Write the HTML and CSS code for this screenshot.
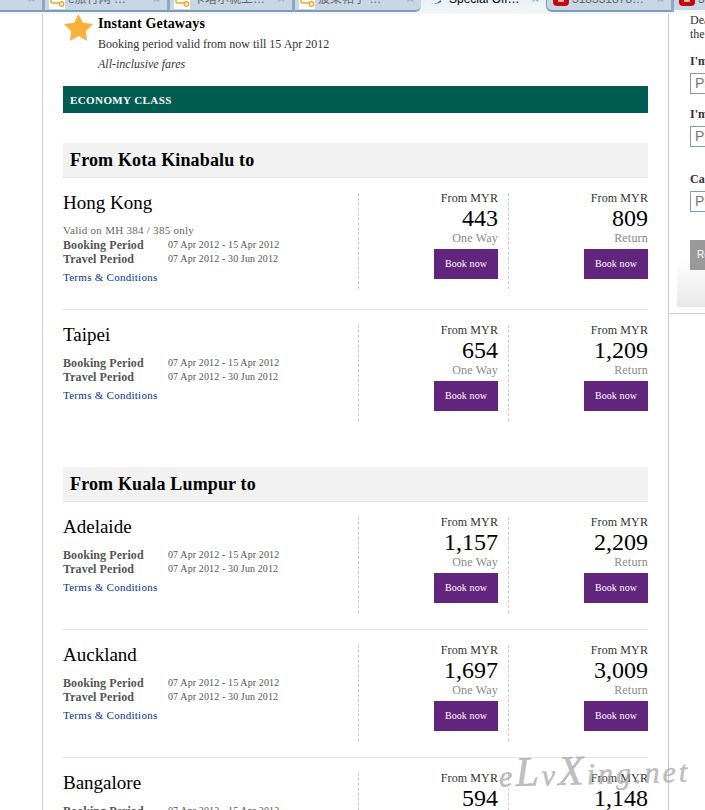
FILE: index.html

```html
<!DOCTYPE html>
<html lang="en">
<head>
  <meta charset="UTF-8">
  <title>Special Offers</title>
  <meta name="viewport" content="width=device-width, initial-scale=1.0">
  <link rel="stylesheet" href="styles.css">
</head>
<body>

<div class="tabs">
  <div class="tab tab-first"><span class="tab-x">×</span></div>
  <div class="tab tab-doc">
    <svg class="doc-icon" width="16" height="9" viewBox="0 0 16 9"><rect width="16" height="9" fill="#fff"/><path d="M2 0v1.5q0 1.5 2 1.5h6" fill="none" stroke="#f5a623" stroke-width="1.5"/><circle cx="12.5" cy="4" r="2.2" fill="#fff" stroke="#f5a623" stroke-width="1.4"/></svg>
    <span class="tab-name">e旅行网 …</span><span class="tab-x">×</span>
  </div>
  <div class="tab tab-doc">
    <svg class="doc-icon" width="16" height="9" viewBox="0 0 16 9"><rect width="16" height="9" fill="#fff"/><path d="M2 0v1.5q0 1.5 2 1.5h6" fill="none" stroke="#f5a623" stroke-width="1.5"/><circle cx="12.5" cy="4" r="2.2" fill="#fff" stroke="#f5a623" stroke-width="1.4"/></svg>
    <span class="tab-name">卡塔尔就上…</span><span class="tab-x">×</span>
  </div>
  <div class="tab tab-doc tab-before">
    <svg class="doc-icon" width="16" height="9" viewBox="0 0 16 9"><rect width="16" height="9" fill="#fff"/><path d="M2 0v1.5q0 1.5 2 1.5h6" fill="none" stroke="#f5a623" stroke-width="1.5"/><circle cx="12.5" cy="4" r="2.2" fill="#fff" stroke="#f5a623" stroke-width="1.4"/></svg>
    <span class="tab-name">菠菜帖子 …</span><span class="tab-x">×</span>
  </div>
  <div class="tab tab-active">
    <svg class="mh-icon" width="10" height="4" viewBox="0 0 10 4"><path d="M0 3q5 2 10-3v2q-4 3-10 1z" fill="#2f5f8f"/></svg>
    <span class="tab-name">Special Off…</span><span class="tab-x">×</span>
  </div>
  <div class="tab tab-red tab-after">
    <svg class="red-icon" width="16" height="6" viewBox="0 0 16 6"><path d="M0 0h16v2q0 4-4 4H4Q0 6 0 2z" fill="#c4080d"/><rect x="5" width="6" height="2" fill="#f3b5b5"/></svg>
    <span class="tab-name">318331878…</span><span class="tab-x">×</span>
  </div>
  <div class="tab tab-red tab-last">
    <svg class="red-icon" width="16" height="6" viewBox="0 0 16 6"><path d="M0 0h16v2q0 4-4 4H4Q0 6 0 2z" fill="#c4080d"/><rect x="5" width="6" height="2" fill="#f3b5b5"/></svg>
    <span class="tab-name">3</span>
  </div>
</div>

<div class="page">
  <main class="main">
    <div class="intro">
      <svg class="star" width="29" height="27" viewBox="0 0 29 27"><polygon fill="#fbb03b" points="14.5,0 18.8,8.8 29,10 21.8,17.2 23.2,27 14.5,22 6,27 7.2,17.2 0,10 10.2,8.8"/></svg>
      <div>
        <h3>Instant Getaways</h3>
        <p>Booking period valid from now till 15 Apr 2012</p>
        <p class="fares"><em>All-inclusive fares</em></p>
      </div>
    </div>

    <div class="class-bar">ECONOMY CLASS</div>

    <h2 class="from">From Kota Kinabalu to</h2>

    <div class="fare fare-note">
      <div class="info">
        <div class="city">Hong Kong</div>
        <div class="note">Valid on MH 384 / 385 only</div>
        <div class="period"><b>Booking Period</b><span>07 Apr 2012 - 15 Apr 2012</span></div>
        <div class="period"><b>Travel Period</b><span>07 Apr 2012 - 30 Jun 2012</span></div>
        <a class="terms" href="#">Terms &amp; Conditions</a>
      </div>
      <div class="price">
        <div class="label">From MYR</div>
        <div class="amount">443</div>
        <div class="way">One Way</div>
        <a class="book" href="#">Book now</a>
      </div>
      <div class="price">
        <div class="label">From MYR</div>
        <div class="amount">809</div>
        <div class="way">Return</div>
        <a class="book" href="#">Book now</a>
      </div>
    </div>

    <div class="fare fare-last">
      <div class="info">
        <div class="city">Taipei</div>
        <div class="period"><b>Booking Period</b><span>07 Apr 2012 - 15 Apr 2012</span></div>
        <div class="period"><b>Travel Period</b><span>07 Apr 2012 - 30 Jun 2012</span></div>
        <a class="terms" href="#">Terms &amp; Conditions</a>
      </div>
      <div class="price">
        <div class="label">From MYR</div>
        <div class="amount">654</div>
        <div class="way">One Way</div>
        <a class="book" href="#">Book now</a>
      </div>
      <div class="price">
        <div class="label">From MYR</div>
        <div class="amount">1,209</div>
        <div class="way">Return</div>
        <a class="book" href="#">Book now</a>
      </div>
    </div>

    <h2 class="from">From Kuala Lumpur to</h2>

    <div class="fare">
      <div class="info">
        <div class="city">Adelaide</div>
        <div class="period"><b>Booking Period</b><span>07 Apr 2012 - 15 Apr 2012</span></div>
        <div class="period"><b>Travel Period</b><span>07 Apr 2012 - 30 Jun 2012</span></div>
        <a class="terms" href="#">Terms &amp; Conditions</a>
      </div>
      <div class="price">
        <div class="label">From MYR</div>
        <div class="amount">1,157</div>
        <div class="way">One Way</div>
        <a class="book" href="#">Book now</a>
      </div>
      <div class="price">
        <div class="label">From MYR</div>
        <div class="amount">2,209</div>
        <div class="way">Return</div>
        <a class="book" href="#">Book now</a>
      </div>
    </div>

    <div class="fare">
      <div class="info">
        <div class="city">Auckland</div>
        <div class="period"><b>Booking Period</b><span>07 Apr 2012 - 15 Apr 2012</span></div>
        <div class="period"><b>Travel Period</b><span>07 Apr 2012 - 30 Jun 2012</span></div>
        <a class="terms" href="#">Terms &amp; Conditions</a>
      </div>
      <div class="price">
        <div class="label">From MYR</div>
        <div class="amount">1,697</div>
        <div class="way">One Way</div>
        <a class="book" href="#">Book now</a>
      </div>
      <div class="price">
        <div class="label">From MYR</div>
        <div class="amount">3,009</div>
        <div class="way">Return</div>
        <a class="book" href="#">Book now</a>
      </div>
    </div>

    <div class="fare">
      <div class="info">
        <div class="city">Bangalore</div>
        <div class="period"><b>Booking Period</b><span>07 Apr 2012 - 15 Apr 2012</span></div>
      </div>
      <div class="price">
        <div class="label">From MYR</div>
        <div class="amount">594</div>
      </div>
      <div class="price">
        <div class="label">From MYR</div>
        <div class="amount">1,148</div>
      </div>
    </div>
  </main>

  <aside class="side">
    <div class="side-inner">
      <p class="side-text">Dear<br>the</p>
      <label class="side-label">I'm</label>
      <div class="side-input">Pl</div>
      <label class="side-label">I'm</label>
      <div class="side-input">Pl</div>
      <label class="side-label side-label-gap">Ca</label>
      <div class="side-input">Pl</div>
      <div class="side-fade"><span class="side-btn">Re</span></div>
    </div>
    <div class="side-rule"></div>
  </aside>
</div>

<div class="watermark">e<span class="wm-cap">L</span>v<span class="wm-cap">X</span>ing.net</div>

</body>
</html>
```

FILE: styles.css

```css
html, body {
  margin: 0;
  padding: 0;
  height: 810px;
  overflow: hidden;
  background: #fff;
}
body {
  font-family: "Liberation Serif", "Noto Sans CJK SC", serif;
  color: #333;
  font-size: 12px;
}

/* browser tab strip, cropped at the top of the window */
.tabs {
  display: flex;
  height: 14px;
  background: #f4f7fa;
  overflow: hidden;
}
.tab {
  display: flex;
  align-items: flex-start;
  flex: none;
  width: 125px;
  height: 10px;
  background: #c8d7e5;
  border-right: 3px solid #8ca8c2;
  border-bottom: 2px solid #7e9cb8;
  padding: 0 7px 0 4px;
  box-sizing: content-box;
  font-family: "Liberation Sans", "Noto Sans CJK SC", sans-serif;
  font-size: 12px;
  line-height: 12px;
  color: #666;
  white-space: nowrap;
}
.tab-first { width: 31px; justify-content: flex-end; }
.tab-doc { width: 111px; }
.tab-before {
  width: 115px;
  border-right: 0;
  border-bottom-right-radius: 6px;
}
.tab-active {
  width: 108px;
  height: 14px;
  padding: 0 7px 0 10px;
  background: linear-gradient(#e9f0f5, #f4f7fa);
  border: 0;
  color: #000;
}
.tab-red { width: 111px; padding-left: 6px; }
.tab-after {
  border-left: 1px solid #7e9cb8;
  border-bottom-left-radius: 6px;
}
.tab-last { border: 0; width: 100px; padding-left: 5px; }
.tab-name {
  flex: 1;
  overflow: hidden;
  margin: -7px 0 0 3px;
  height: 12px;
}
.tab-active .tab-name { margin-left: 8px; }
.tab-x {
  margin-top: -7px;
  color: #9fb2c4;
  font-size: 13px;
  font-weight: bold;
}
.doc-icon, .mh-icon, .red-icon { flex: none; }

.page {
  display: flex;
  padding-left: 42px;
}

/* main column */
.main {
  width: 585px;
  flex: none;
  padding: 0 20px;
  border-left: 1px solid #ccc;
  border-right: 1px solid #ccc;
}
.intro {
  display: flex;
  gap: 5px;
  height: 72px;
  box-sizing: border-box;
}
.star { flex: none; margin-left: 1px; }
.intro h3 {
  margin: 1px 0 0;
  color: #000;
  font-size: 14px;
  line-height: 18px;
  letter-spacing: 0.15px;
}
.intro p {
  margin: 4px 0 0;
  line-height: 15px;
  font-size: 12px;
}
.intro .fares { margin-top: 5px; }
.class-bar {
  background: #015c52;
  color: #fff;
  font-weight: bold;
  font-size: 11px;
  letter-spacing: 0.4px;
  height: 27px;
  line-height: 28px;
  padding-left: 7px;
}
h2.from {
  margin: 30px 0 0;
  background: #f2f2f2;
  border-bottom: 1px solid #e3e3e3;
  color: #000;
  font-size: 18px;
  letter-spacing: 0.15px;
  height: 34px;
  line-height: 34px;
  padding-left: 7px;
}

/* one destination row */
.fare {
  display: flex;
  padding: 15px 0 16px;
  border-bottom: 1px solid #e5e5e5;
}
.fare-note { padding-bottom: 20px; }
.fare-last {
  border-bottom: 0;
  padding-bottom: 16px;
}
.info {
  width: 295px;
  flex: none;
  height: 96px;
}
.city {
  color: #000;
  font-size: 19px;
  line-height: 22px;
  margin: -1px 0 10px;
}
.note {
  line-height: 15px;
  color: #666;
  font-size: 11px;
  letter-spacing: 0.27px;
  margin-top: -1px;
}
.period {
  display: flex;
  line-height: 14px;
  font-size: 10px;
  letter-spacing: 0.12px;
  color: #555;
}
.period b {
  width: 105px;
  font-size: 12px;
  letter-spacing: 0.07px;
}
.terms {
  display: block;
  margin-top: 4px;
  color: #003399;
  font-size: 11px;
  letter-spacing: 0.27px;
  line-height: 14px;
  text-decoration: none;
}
.price {
  width: 139px;
  flex: none;
  height: 96px;
  border-left: 1px dashed #ccc;
  display: flex;
  flex-direction: column;
  align-items: flex-end;
  text-align: right;
}
.price + .price { margin-left: 10px; }
.label {
  line-height: 14px;
  font-size: 12px;
  letter-spacing: 0.1px;
  margin-top: -2px;
}
.amount {
  color: #000;
  font-size: 24px;
  line-height: 26px;
  margin-bottom: 1px;
}
.way {
  color: #888;
  font-size: 12px;
  letter-spacing: 0.2px;
  line-height: 13px;
  margin-bottom: 4px;
}
.book {
  display: block;
  width: 64px;
  height: 30px;
  line-height: 29px;
  background: #62257d;
  color: #fff;
  font-size: 10px;
  letter-spacing: 0.1px;
  text-align: center;
  text-decoration: none;
}

/* right column, cut off by the window */
.side {
  flex: 1;
  min-width: 0;
  overflow: hidden;
}
.side-inner { padding-left: 21px; }
.side-text {
  margin: -1px 0 0;
  line-height: 14px;
  font-size: 12px;
}
.side-label {
  display: block;
  margin-top: 13px;
  color: #333;
  font-size: 12px;
  font-weight: bold;
  line-height: 14px;
}
.side-label-gap { margin-top: 25px; }
.side-input {
  margin-top: 5px;
  height: 19px;
  line-height: 19px;
  border: 1px solid #7f9db9;
  border-right: 0;
  padding-left: 4px;
  font-family: "Liberation Sans", sans-serif;
  font-size: 14px;
  color: #777;
}
.side-fade {
  margin: 28px 0 0 -13px;
  height: 67px;
  background: linear-gradient(#fff 30%, #e8e8e8);
}
.side-btn {
  display: block;
  margin-left: 13px;
  height: 30px;
  line-height: 30px;
  padding-left: 7px;
  background: #999;
  color: #fff;
  font-family: "Liberation Sans", sans-serif;
  font-size: 10px;
}
.side-rule {
  border-top: 1px solid #ccc;
  margin: 6px 0 0 1px;
}

/* photo site stamp across the corner */
.watermark {
  position: absolute;
  left: 499px;
  top: 747px;
  color: rgba(170, 170, 170, 0.75);
  -webkit-text-stroke: 0.5px rgba(170, 170, 170, 0.75);
  font-style: italic;
  font-size: 30px;
  letter-spacing: 3px;
  line-height: 46px;
  white-space: nowrap;
  transform: rotate(-1.5deg);
}
.wm-cap { font-size: 42px; }
```
